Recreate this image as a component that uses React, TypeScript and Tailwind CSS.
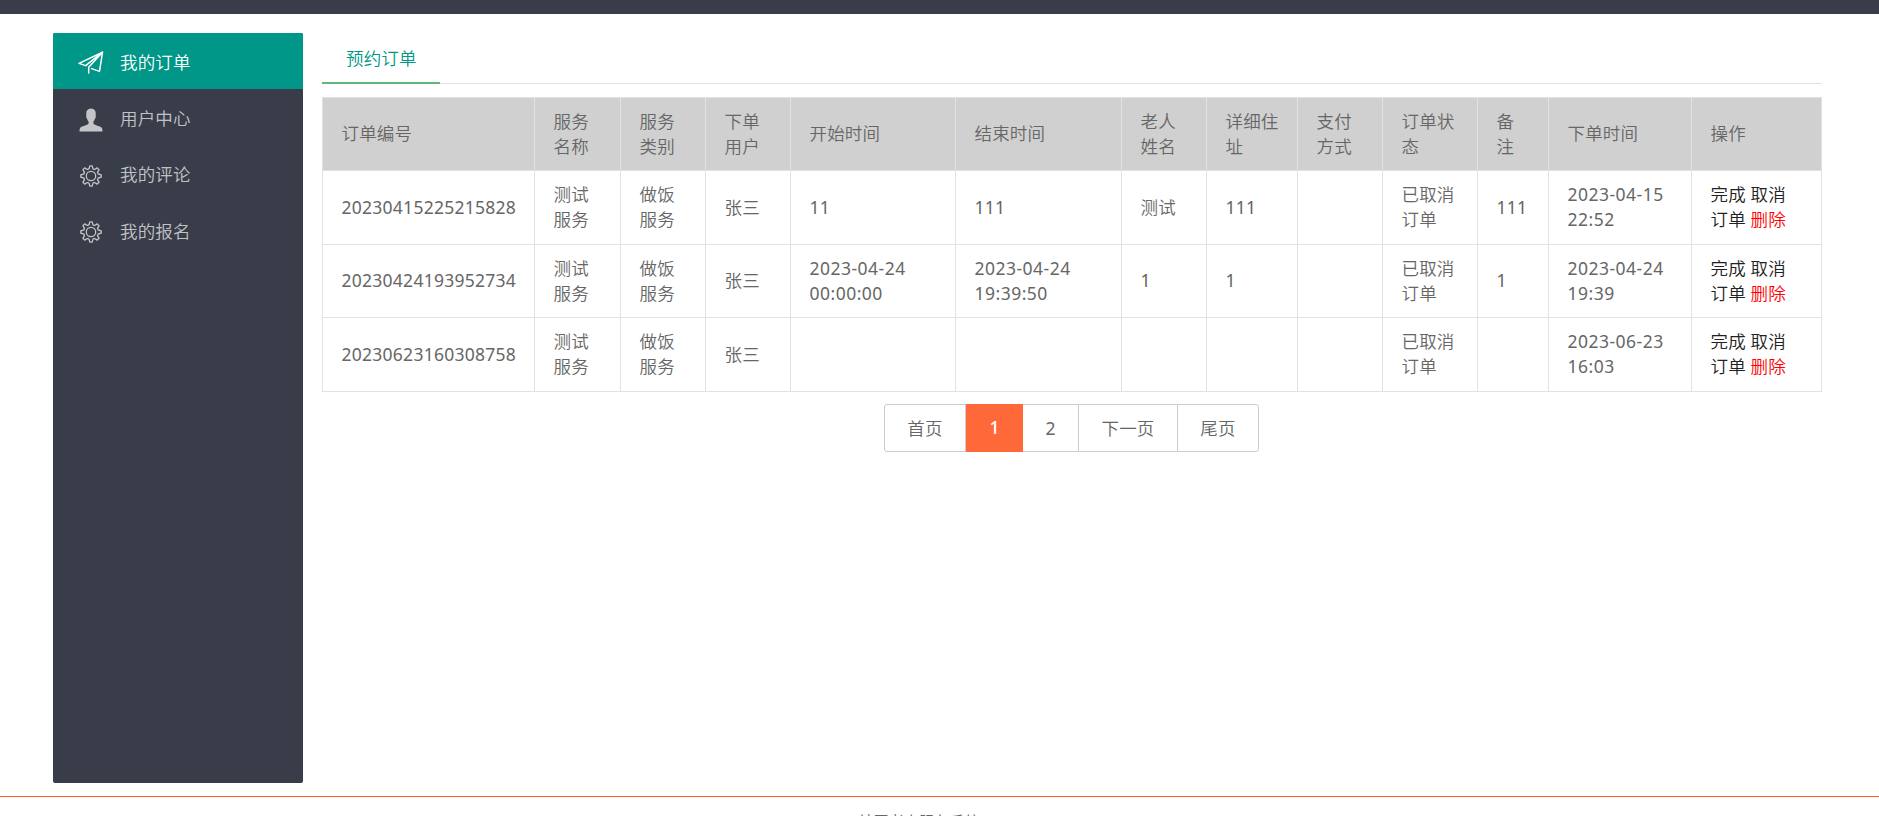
import React from "react";

const PlaneIcon = () => (
  <svg width="26" height="24" viewBox="0 0 26 24" fill="none" stroke="currentColor" strokeWidth="1.500" strokeLinejoin="round" strokeLinecap="round">
    <path d="M24.500 1.200 1 12.400 7.700 14.600M24.500 1.200 21.500 20.400 13.600 17.600" />
    <path d="M24.500 1.200 7.700 14.600M24.500 1.200 10.700 16.300V22" />
  </svg>
);

const UserIcon = () => (
  <svg width="24" height="24" viewBox="0 0 24 24" fill="currentColor">
    <path d="M12 .5c3.200 0 4.800 2.100 4.800 5.200 0 .9-.1 1.500-.3 2.100.6.600.3 2.300-.5 2.800-.3 1.300-.9 2.400-1.600 3.100v1.800c.8 1.300 4.400 2.300 6.900 3.300 1.600.700 2.200 1.700 2.200 4.700H.5c0-3 .6-4 2.200-4.700 2.500-1 6.100-2 6.900-3.300v-1.800c-.7-.7-1.300-1.800-1.600-3.100-.8-.5-1.100-2.200-.5-2.800-.2-.6-.3-1.200-.3-2.100C7.200 2.600 8.800.5 12 .5Z" />
  </svg>
);

const GearIcon = () => (
  <svg width="24" height="24" viewBox="0 0 24 24" fill="none" stroke="currentColor" strokeWidth="1.3" strokeLinejoin="round">
    <path d="M10.800 1.800h2.400l.8 3 1.600.7 2.700-1.600 1.800 1.800-1.600 2.700.7 1.600 3 .8v2.400l-3 .8-.7 1.600 1.600 2.700-1.800 1.800-2.700-1.600-1.600.7-.8 3h-2.400l-.8-3-1.600-.7-2.700 1.600-1.800-1.800 1.600-2.700-.7-1.600-3-.8v-2.400l3-.8.7-1.600-1.600-2.700 1.800-1.800 2.700 1.600 1.600-.7z" />
    <circle cx="12" cy="12" r="4.700" />
  </svg>
);

const menu = [
  { label: "我的订单", icon: <PlaneIcon />, active: true },
  { label: "用户中心", icon: <UserIcon />, active: false },
  { label: "我的评论", icon: <GearIcon />, active: false },
  { label: "我的报名", icon: <GearIcon />, active: false },
];

const columns = [
  { title: "订单编号", width: 212 },
  { title: "服务名称", width: 86 },
  { title: "服务类别", width: 85 },
  { title: "下单用户", width: 85 },
  { title: "开始时间", width: 165 },
  { title: "结束时间", width: 166 },
  { title: "老人姓名", width: 85 },
  { title: "详细住址", width: 91 },
  { title: "支付方式", width: 85 },
  { title: "订单状态", width: 95 },
  { title: "备注", width: 71 },
  { title: "下单时间", width: 143 },
  { title: "操作", width: 130 },
];

const rows = [
  { height: "h-[74px]", cells: ["20230415225215828", "测试服务", "做饭服务", "张三", "11", "111", "测试", "111", "", "已取消订单", "111", "2023-04-15 22:52"] },
  { height: "h-[73px]", cells: ["20230424193952734", "测试服务", "做饭服务", "张三", "2023-04-24 00:00:00", "2023-04-24 19:39:50", "1", "1", "", "已取消订单", "1", "2023-04-24 19:39"] },
  { height: "h-[74px]", cells: ["20230623160308758", "测试服务", "做饭服务", "张三", "", "", "", "", "", "已取消订单", "", "2023-06-23 16:03"] },
];

const cell = "border-b border-r border-[#e2e2e2] pt-0 pb-px pl-[18.5px] pr-[18px] text-left align-middle font-[350]";
const actionCell = "border-b border-r border-[#e2e2e2] pt-0 pb-px pl-[18.5px] pr-[30px] text-left align-middle text-[#222]";

const textStyle = (text: string) => {
  if (/^\d{4}-/.test(text)) return "font-normal tracking-[0.48px]";
  return /^\d+$/.test(text) ? "font-normal tracking-[0.26px]" : "";
};

export default function App() {
  return (
    <div className="flex h-[816px] w-full flex-col overflow-hidden bg-white font-['Noto_Sans','Noto_Sans_CJK_SC',sans-serif] text-[17.5px] font-[350] leading-[25px] tracking-[0.15px] text-[#666]">
      <header className="h-[14px] shrink-0 bg-[#393d49]" />
      <div className="flex gap-[19px] pl-[53px] pt-[19px]">
        <nav className="h-[750px] w-[250px] shrink-0 overflow-hidden rounded-[2px] bg-[#393d49]">
          {menu.map((item) => (
            <a
              key={item.label}
              className={
                item.active
                  ? "flex h-[56.4px] items-center bg-[#009688] pl-[25px] text-white"
                  : "flex h-[56.4px] items-center pl-[25px] text-white/70"
              }
            >
              <span className="flex w-[26px] justify-center pt-[4px]">{item.icon}</span>
              <span className="pl-[16px] pt-[2px]">{item.label}</span>
            </a>
          ))}
        </nav>

        <main className="w-[1500px] shrink-0">
          <div className="flex h-[51px] items-start border-b border-[#e2e2e2]">
            <a className="h-[51px] w-[118px] shrink-0 border-b-2 border-[#5fb878] pl-[24px] pt-[13px] text-[#009688]">
              预约订单
            </a>
          </div>

          <table className="mt-[13px] w-[1500px] table-fixed border-separate border-spacing-0 border-l border-t border-[#e2e2e2]">
            <colgroup>
              {columns.map((c) => (
                <col key={c.title} style={{ width: c.width }} />
              ))}
            </colgroup>
            <thead>
              <tr className="h-[73px] bg-[#d0d0d0]">
                {columns.map((c) => (
                  <th key={c.title} className={cell}>
                    {c.title}
                  </th>
                ))}
              </tr>
            </thead>
            <tbody>
              {rows.map((row) => (
                <tr key={row.cells[0]} className={row.height}>
                  {row.cells.map((text, i) => (
                    <td key={i} className={cell}>
                      <span className={textStyle(text)}>{text}</span>
                    </td>
                  ))}
                  <td className={actionCell}>
                    完成 取消订单 <span className="text-[#f00]">删除</span>
                  </td>
                </tr>
              ))}
            </tbody>
          </table>

          <div className="mt-[12px] flex justify-center pr-px">
            <div className="flex h-[48px] w-[375px] rounded-[3px] border border-[#ccc] leading-[47px]">
              <a className="w-[81px] border-r border-[#ccc] text-center">首页</a>
              <a className="-my-px w-[57px] bg-[#ff6839] text-center font-medium text-white">1</a>
              <a className="w-[56px] border-r border-[#ccc] text-center font-normal">2</a>
              <a className="w-[99px] border-r border-[#ccc] text-center">下一页</a>
              <a className="flex-1 text-center">尾页</a>
            </div>
          </div>
        </main>
      </div>
      <footer className="mt-[13px] shrink-0 border-t border-[#ff5722] pt-[12px] text-center text-[15px] text-[#666]">
        <span className="pr-[41px]">社区老人服务系统</span>
      </footer>
    </div>
  );
}
